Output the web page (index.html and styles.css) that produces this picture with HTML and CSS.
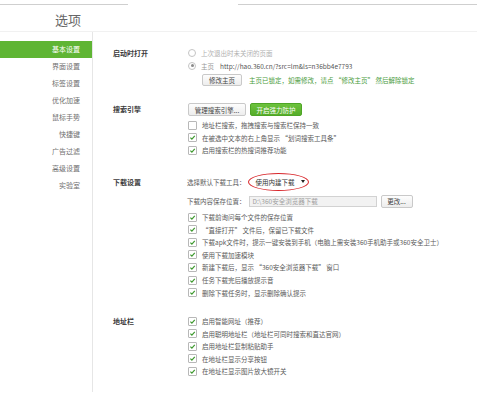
FILE: index.html
```html
<!DOCTYPE html>
<html lang="zh-CN">
<head>
<meta charset="utf-8">
<title>选项</title>
<link rel="stylesheet" href="styles.css">
</head>
<body>
<div class="topstrip"><span class="seg seg-a"></span><span class="seg seg-b"></span></div>
<header class="title">选项</header>
<div class="main">
  <nav class="side">
    <div class="nav-item active">基本设置</div>
    <div class="nav-item">界面设置</div>
    <div class="nav-item">标签设置</div>
    <div class="nav-item">优化加速</div>
    <div class="nav-item">鼠标手势</div>
    <div class="nav-item">快捷键</div>
    <div class="nav-item">广告过滤</div>
    <div class="nav-item">高级设置</div>
    <div class="nav-item">实验室</div>
  </nav>
  <div class="content">
    <section class="sec sec-first">
      <div class="label">启动时打开</div>
      <div class="body">
        <div class="row"><span class="radio"></span><span class="muted">上次退出时未关闭的页面</span></div>
        <div class="row"><span class="radio on"></span><span class="dim">主页</span><span class="url">http://hao.360.cn/?src=lm&amp;ls=n36bb4e7793</span></div>
        <div class="btnrow indent"><span class="btn">修改主页</span><span class="lock">主页已锁定，如需修改，请点 “修改主页” 然后解除锁定</span></div>
      </div>
    </section>
    <section class="sec">
      <div class="label label-btn">搜索引擎</div>
      <div class="body">
        <div class="btnrow"><span class="btn btn-manage">管理搜索引擎...</span><span class="btn btn-green">开启强力防护</span></div>
        <div class="list">
          <div class="row"><span class="cb"></span>地址栏搜索，拖拽搜索与搜索栏保持一致</div>
          <div class="row"><span class="cb on"><svg viewBox="0 0 8 8"><path d="M1.6 4.1 L3.3 5.8 L6.6 2.2"/></svg></span>在被选中文本的右上角显示 “划词搜索工具条”</div>
          <div class="row"><span class="cb on"><svg viewBox="0 0 8 8"><path d="M1.6 4.1 L3.3 5.8 L6.6 2.2"/></svg></span>启用搜索栏的热搜词推荐功能</div>
        </div>
      </div>
    </section>
    <section class="sec">
      <div class="label label-tall">下载设置</div>
      <div class="body">
        <div class="selrow">选择默认下载工具：<span class="select">使用内建下载<span class="caret"></span></span></div>
        <div class="pathrow">下载内容保存位置：<span class="input">D:\360安全浏览器下载</span><span class="btn btn-change">更改...</span></div>
        <div class="list">
          <div class="row"><span class="cb on"><svg viewBox="0 0 8 8"><path d="M1.6 4.1 L3.3 5.8 L6.6 2.2"/></svg></span>下载前询问每个文件的保存位置</div>
          <div class="row"><span class="cb on"><svg viewBox="0 0 8 8"><path d="M1.6 4.1 L3.3 5.8 L6.6 2.2"/></svg></span>“直接打开” 文件后，保留已下载文件</div>
          <div class="row"><span class="cb on"><svg viewBox="0 0 8 8"><path d="M1.6 4.1 L3.3 5.8 L6.6 2.2"/></svg></span>下载apk文件时，提示一键安装到手机（电脑上需安装360手机助手或360安全卫士）</div>
          <div class="row"><span class="cb on"><svg viewBox="0 0 8 8"><path d="M1.6 4.1 L3.3 5.8 L6.6 2.2"/></svg></span>使用下载加速模块</div>
          <div class="row"><span class="cb on"><svg viewBox="0 0 8 8"><path d="M1.6 4.1 L3.3 5.8 L6.6 2.2"/></svg></span>新建下载后，显示 “360安全浏览器下载” 窗口</div>
          <div class="row"><span class="cb on"><svg viewBox="0 0 8 8"><path d="M1.6 4.1 L3.3 5.8 L6.6 2.2"/></svg></span>任务下载完后播放提示音</div>
          <div class="row"><span class="cb on"><svg viewBox="0 0 8 8"><path d="M1.6 4.1 L3.3 5.8 L6.6 2.2"/></svg></span>删除下载任务时，显示删除确认提示</div>
        </div>
      </div>
    </section>
    <section class="sec">
      <div class="label">地址栏</div>
      <div class="body">
        <div class="row"><span class="cb on"><svg viewBox="0 0 8 8"><path d="M1.6 4.1 L3.3 5.8 L6.6 2.2"/></svg></span>启用智能网址（推荐）</div>
        <div class="row"><span class="cb on"><svg viewBox="0 0 8 8"><path d="M1.6 4.1 L3.3 5.8 L6.6 2.2"/></svg></span>启用聪明地址栏（地址栏可同时搜索和直达官网）</div>
        <div class="row"><span class="cb on"><svg viewBox="0 0 8 8"><path d="M1.6 4.1 L3.3 5.8 L6.6 2.2"/></svg></span>启用地址栏复制粘贴助手</div>
        <div class="row"><span class="cb on"><svg viewBox="0 0 8 8"><path d="M1.6 4.1 L3.3 5.8 L6.6 2.2"/></svg></span>在地址栏显示分享按钮</div>
        <div class="row"><span class="cb on"><svg viewBox="0 0 8 8"><path d="M1.6 4.1 L3.3 5.8 L6.6 2.2"/></svg></span>在地址栏显示图片放大镜开关</div>
      </div>
    </section>
  </div>
</div>
</body>
</html>
```
FILE: styles.css
```css
html, body {
  margin: 0;
  padding: 0;
  background: #ffffff;
  height: 100%;
}
body {
  font-family: "Noto Sans CJK SC", "Noto Sans", sans-serif;
  font-size: 6.5px;
  color: #5a5a5a;
  overflow: hidden;
}
.topstrip {
  display: flex;
  padding-top: 4px;
  height: 1px;
}
.seg {
  display: block;
  height: 1px;
  background: #cfcfcf;
}
.seg-a { width: 128px; }
.seg-b { margin-left: 110px; flex: 1; }

.title {
  height: 27px;
  box-sizing: border-box;
  padding: 3px 0 0 55px;
  line-height: 24px;
  font-size: 13px;
  color: #666;
  border-bottom: 1px solid #f1f1f1;
}

.main {
  display: flex;
  height: 360px;
}
.side {
  width: 92px;
  flex: none;
  padding-top: 9px;
  border-right: 1px solid #e6e6e6;
}
.nav-item {
  height: 17px;
  line-height: 17px;
  text-align: right;
  padding-right: 12px;
  font-size: 7px;
  color: #707070;
}
.nav-item.active {
  background: #5fb534;
  color: #ffffff;
}

.content {
  flex: 1;
  padding-left: 20px;
  padding-top: 15px;
}
.sec {
  display: grid;
  grid-template-columns: 74px 1fr;
  margin-top: 16px;
}
.sec-first { margin-top: 0; }
.sec:nth-child(2) { margin-top: 17px; }
.label {
  font-size: 7px;
  font-weight: bold;
  color: #3a3a3a;
  line-height: 12.5px;
}
.label-btn { line-height: 13px; }
.label-tall { line-height: 18px; }

.row {
  display: flex;
  align-items: center;
  height: 12.5px;
  white-space: nowrap;
}
.list .row { height: 12.6px; }
.list { margin-top: 3px; }

.radio {
  width: 6px;
  height: 6px;
  border: 1px solid #c4c4c4;
  border-radius: 50%;
  margin: 0 5px 0 1px;
  position: relative;
  background: #fff;
}
.radio.on::after {
  content: "";
  position: absolute;
  left: 1.5px;
  top: 1.5px;
  width: 3px;
  height: 3px;
  border-radius: 50%;
  background: #8a8a8a;
}
.muted { color: #b0b0b0; }
.dim { color: #999; margin-right: 6px; }
.url { color: #555; }

.cb {
  width: 7px;
  height: 7px;
  border: 1px solid #b8b8b8;
  border-radius: 1px;
  background: #fff;
  margin: 0 5px 0 1px;
  flex: none;
  display: flex;
}
.cb svg {
  width: 7px;
  height: 7px;
}
.cb path {
  fill: none;
  stroke: #3f9a2f;
  stroke-width: 1.4;
}

.btnrow {
  display: flex;
  align-items: center;
  gap: 4px;
  white-space: nowrap;
}
.btnrow.indent {
  margin-top: 2px;
  padding-left: 15px;
  gap: 7px;
}
.btn {
  display: inline-flex;
  align-items: center;
  justify-content: center;
  height: 12px;
  box-sizing: border-box;
  padding: 0 6px;
  border: 1px solid #c9c9c9;
  border-radius: 2px;
  background: linear-gradient(#fdfdfd, #ededed);
  color: #444;
}
.btn-manage {
  width: 58px;
  height: 13px;
  margin-left: 1px;
}
.btn-green {
  width: 52px;
  height: 13px;
  background: linear-gradient(#6cc23c, #56ad2a);
  border-color: #4ea526;
  color: #fff;
}
.lock { color: #4b9c3e; }

.selrow {
  display: flex;
  align-items: center;
  height: 18px;
  white-space: nowrap;
}
.select {
  position: relative;
  display: inline-flex;
  align-items: center;
  margin-left: 2px;
  height: 18px;
  padding: 0 4px 0 8px;
  color: #333;
}
.select::after {
  content: "";
  position: absolute;
  left: 0;
  top: 0;
  right: 0;
  bottom: 0;
  border: 1.5px solid #d8262b;
  border-radius: 50%;
}
.caret {
  width: 0;
  height: 0;
  margin-left: 6px;
  border-left: 2.5px solid transparent;
  border-right: 2.5px solid transparent;
  border-top: 3px solid #222;
}

.pathrow {
  display: flex;
  align-items: center;
  height: 13px;
  margin-top: 4px;
  white-space: nowrap;
}
.input {
  display: inline-flex;
  align-items: center;
  width: 128px;
  height: 11px;
  box-sizing: border-box;
  margin-left: 3px;
  padding-left: 3px;
  border: 1px solid #d2d2d2;
  background: #f2f2f2;
  color: #a0a0a0;
}
.btn-change {
  width: 32px;
  height: 13px;
  margin-left: 4px;
}
```
